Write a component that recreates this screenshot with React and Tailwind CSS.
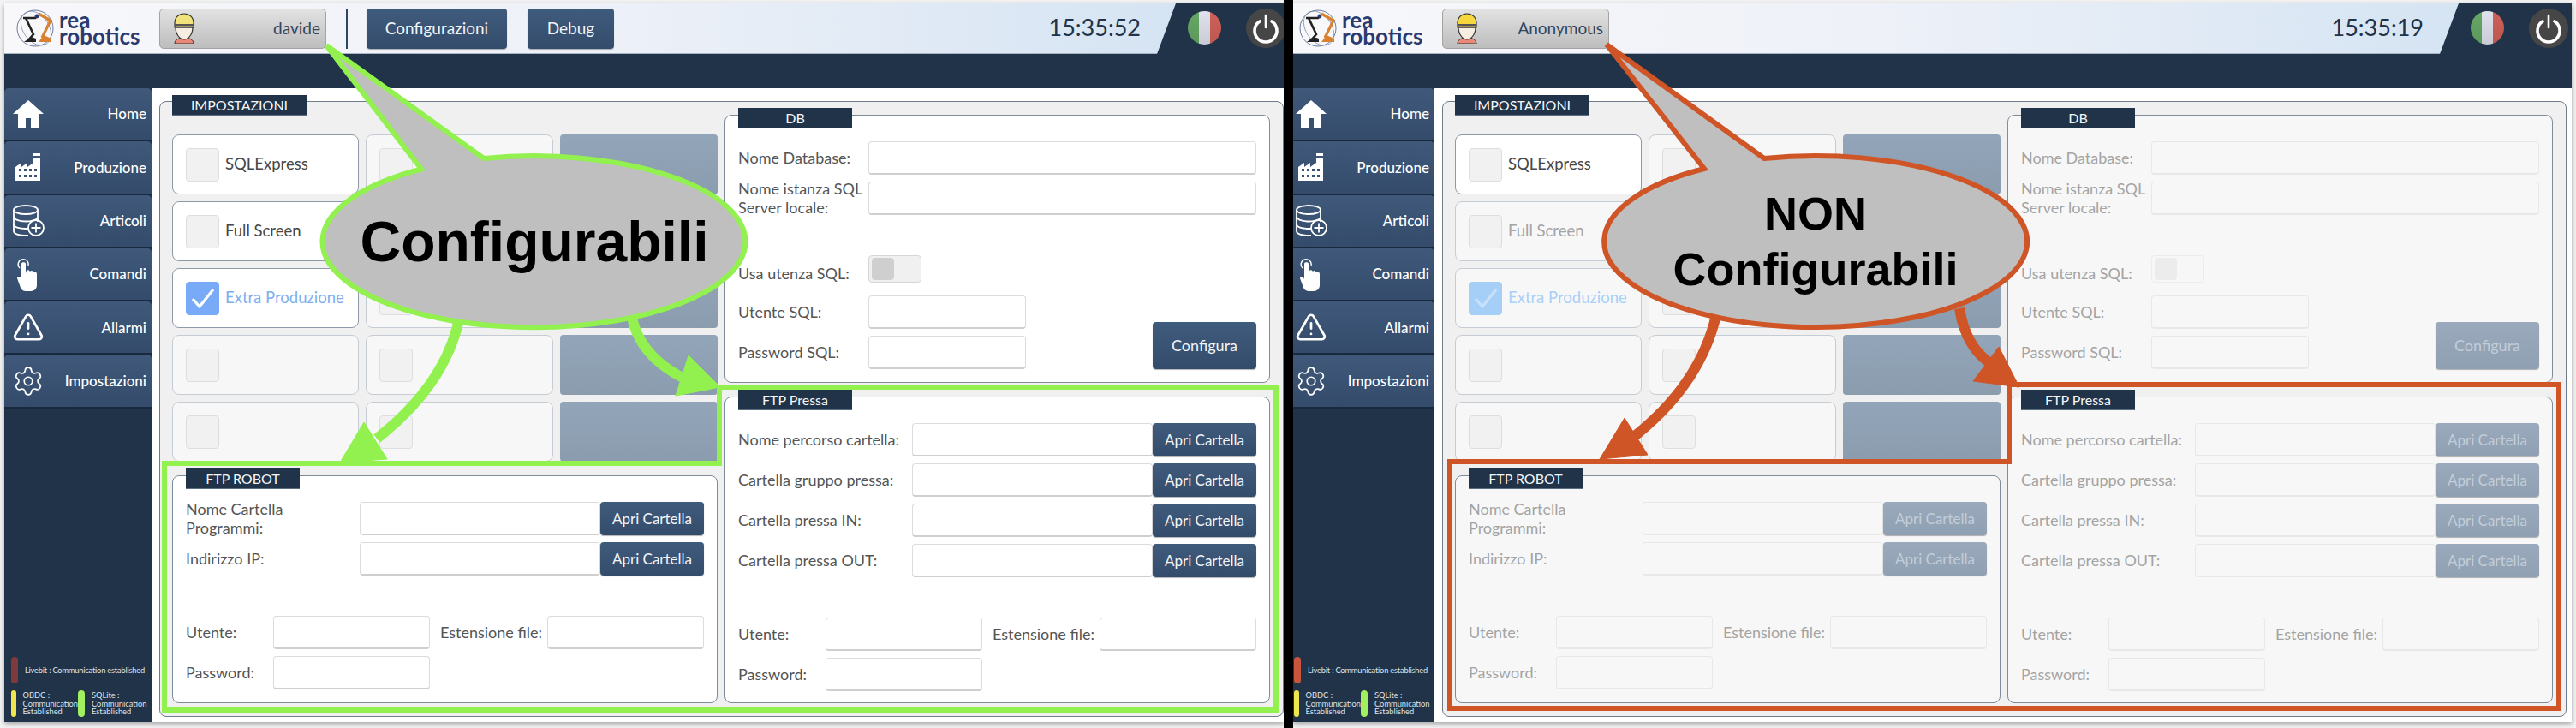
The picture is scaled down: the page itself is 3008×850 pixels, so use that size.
import React from "react";
import { Settings, TriangleAlert } from "lucide-react";

const NAV = [
  { label: "Home", icon: <HomeIcon /> },
  { label: "Produzione", icon: <FactoryIcon /> },
  { label: "Articoli", icon: <DatabaseIcon /> },
  { label: "Comandi", icon: <HandIcon /> },
  { label: "Allarmi", icon: <TriangleAlert size={40} strokeWidth={1.7} color="white" /> },
  { label: "Impostazioni", icon: <Settings size={40} strokeWidth={1.1} color="white" /> },
];

function HomeIcon() {
  return (
    <svg width="38" height="34" viewBox="0 0 38 34">
      <path d="M19 1 L37 17 L31 17 L31 33 L22 33 L22 22 L16 22 L16 33 L7 33 L7 17 L1 17 Z" fill="white" />
    </svg>
  );
}

function FactoryIcon() {
  return (
    <svg width="32" height="32" viewBox="0 0 32 32">
      <rect x="22" y="0" width="8" height="3" fill="white" />
      <path d="M1 16 L8 11 L8 16 L15 11 L15 16 L22 11 L22 6 L30 6 L30 32 L1 32 Z" fill="white" />
      <g fill="#3a5272">
        <rect x="5" y="18" width="3" height="3" />
        <rect x="11" y="18" width="3" height="3" />
        <rect x="17" y="18" width="3" height="3" />
        <rect x="23" y="18" width="3" height="3" />
        <rect x="5" y="25" width="3" height="3" />
        <rect x="11" y="25" width="3" height="3" />
        <rect x="17" y="25" width="3" height="3" />
        <rect x="23" y="25" width="3" height="3" />
      </g>
    </svg>
  );
}

function DatabaseIcon() {
  return (
    <svg width="38" height="38" viewBox="0 0 38 38" fill="none" stroke="white" strokeWidth="1.8">
      <ellipse cx="16" cy="6" rx="14" ry="5" />
      <path d="M2 6 V31 C2 34 8 36 16 36 H19 M30 6 V20" />
      <path d="M2 14 C2 17 8 19.500 16 19.500 C22 19.500 27 18 30 16" />
      <path d="M2 23 C2 26 8 28 16 28 H20" />
      <circle cx="28" cy="27" r="9" />
      <path d="M28 21.500 V32.500 M22.500 27 H33.500" />
    </svg>
  );
}

function HandIcon() {
  return (
    <svg width="30" height="42" viewBox="0 0 30 42">
      <path d="M5 14 A6 6 0 1 1 15 11" fill="none" stroke="white" strokeWidth="1.4" />
      <path
        d="M7 9 C7 6.500 12 6.500 12 9 V20 L13 17 C14 16 16 16 17 18 C18 16.500 20 16.500 21 19 C22 18 25 18 25 21 V34 C25 38 22 41 18 41 H12 C8 41 6 38 5 34 L2 26 C2 24 4 23 6 25 L7 27 Z"
        fill="white"
      />
    </svg>
  );
}

function WorkerIcon({ hat }) {
  return (
    <svg width="26" height="36" viewBox="0 0 26 36">
      <path d="M2 36 C2 31 7 29 13 29 C19 29 24 31 24 36 Z" fill="#e9897a" stroke="#333" strokeWidth="1" />
      <path d="M3 17 C3 25 8 31 13 31 C18 31 23 25 23 17 Z" fill="#f6eee2" stroke="#333" strokeWidth="1.2" />
      <path d="M2 17 V12 C2 5 7 1 13 1 C19 1 24 5 24 12 V17 Z" fill={hat} stroke="#333" strokeWidth="1.2" />
      <rect x="2" y="13" width="22" height="2.500" fill="#555" />
    </svg>
  );
}

function Logo() {
  return (
    <div className="flex items-center ml-[14px] w-[147px]">
      <svg width="46" height="46" viewBox="0 0 46 46" className="shrink-0">
        <circle cx="22" cy="23" r="21" fill="none" stroke="#4a5a86" strokeWidth="0.8" />
        <ellipse cx="23" cy="23" rx="15" ry="22" fill="none" stroke="#7c88a8" strokeWidth="0.7" transform="rotate(-35 23 23)" />
        <path d="M8 11 H22 L24 9 M11 11 L20 30 L13 38" fill="none" stroke="#222" strokeWidth="2.600" />
        <path d="M9 39 H23 V35 L17 33 Z" fill="#222" />
        <circle cx="24" cy="9" r="2.400" fill="#2a3a6e" />
        <path d="M26 6 L40 14 L30 34" fill="none" stroke="#d9812f" strokeWidth="3.200" />
        <path d="M26 39 H41 V35 L32 31 Z" fill="#d9812f" />
      </svg>
      <div className="ml-[4px] font-['Lato',sans-serif] font-bold text-[#2a3a6e] text-[26px] leading-[19px]">
        rea<br />robotics
      </div>
    </div>
  );
}

function Flag() {
  return (
    <div className="relative flex w-[39px] h-[39px] rounded-full overflow-hidden">
      <div className="flex-1 bg-[#66a766]" />
      <div className="flex-1 bg-[#dfe2ec]" />
      <div className="flex-1 bg-[#cf6158]" />
      <div className="absolute inset-0 bg-gradient-to-b from-transparent to-black/10" />
    </div>
  );
}

function PowerButton() {
  return (
    <div className="flex items-center justify-center w-[46px] h-[46px] rounded-full bg-[#464646]">
      <svg width="36" height="36" viewBox="0 0 36 36" fill="none" stroke="white" strokeWidth="3.600" strokeLinecap="round">
        <path d="M11 10 A13 13 0 1 0 25 10" />
        <path d="M18 3 V17" strokeWidth="2.600" />
      </svg>
    </div>
  );
}

function Header({ user, time, admin }) {
  return (
    <div className="flex h-[59px] bg-[#203349] shrink-0">
      <div className="flex w-[1368px] h-[59px] items-center bg-gradient-to-r from-[#f8f8fb] via-[#eef1f8] to-[#d5e4f3] border-b border-[#a9b4c2] [clip-path:polygon(0_0,100%_0,calc(100%-22px)_100%,0_100%)]">
        <Logo />
        <div className="flex items-center justify-between ml-[20px] w-[195px] h-[47px] pl-[15px] pr-[6px] rounded-[5px] border border-[#a3a3a3] bg-gradient-to-b from-[#e2e2e2] to-[#bdbdbd] text-[#2f4560] text-[19px]">
          <WorkerIcon hat={admin ? "#f1e27c" : "#f6d83e"} />
          <span>{user}</span>
        </div>
        {admin && (
          <>
            <div className="ml-[23px] w-[2px] h-[47px] bg-[#2f4560]" />
            <BlueButton className="ml-[22px] w-[164px] h-[47px] text-[19px]">Configurazioni</BlueButton>
            <BlueButton className="ml-[24px] w-[101px] h-[47px] text-[19px]">Debug</BlueButton>
          </>
        )}
        <div className="ml-auto mr-[41px] text-[#203349] text-[27px] leading-none pb-[4px]">{time}</div>
      </div>
      <div className="flex items-center ml-[14px] gap-[29px] pb-[2px]">
        <Flag />
        <PowerButton />
      </div>
    </div>
  );
}

function BlueButton({ children, className, disabled }) {
  const look = disabled
    ? "bg-gradient-to-b from-[#9aaabc] to-[#8fa0b2] text-[#c3cdd8]"
    : "bg-gradient-to-b from-[#3f5b7c] to-[#344c6c] text-[#f2f4f7]";
  return <div className={`flex items-center justify-center rounded-[4px] shrink-0 shadow-[0_1px_1px_rgba(0,0,0,0.3)] ${look} ${className}`}>{children}</div>;
}

function Sidebar({ liveColor }) {
  return (
    <div className="flex flex-col w-[172px] shrink-0 bg-[#203349]">
      {NAV.map((n) => (
        <div
          key={n.label}
          className="flex items-center justify-between h-[62.300px] pl-[9px] pr-[6px] rounded-t-[5px] border-b-2 border-[#1a2a3e] bg-gradient-to-b from-[#40597a] to-[#344b6b] text-white text-[17px] font-medium"
        >
          <div className="flex justify-center w-[38px]">{n.icon}</div>
          <span>{n.label}</span>
        </div>
      ))}
      <div className="mt-auto pl-[8px] pb-[6px] text-[9.300px] leading-[9.500px] text-[#dfe4ea] whitespace-nowrap">
        <div className="flex items-center gap-[8px]">
          <div className={`w-[8px] h-[31px] rounded-full ${liveColor}`} />
          <span className="leading-[12px] tracking-[-0.2px]">Livebit : Communication established</span>
        </div>
        <div className="flex mt-[8px]">
          <div className="flex items-center gap-[8px] w-[78px]">
            <div className="w-[8px] h-[31px] rounded-full bg-[#efe64f]" />
            <span>OBDC :<br />Communication<br />Established</span>
          </div>
          <div className="flex items-center gap-[8px]">
            <div className="w-[8px] h-[31px] rounded-full bg-[#a0f060]" />
            <span>SQLite :<br />Communication<br />Established</span>
          </div>
        </div>
      </div>
    </div>
  );
}

function Tile({ label, enabled, checked }) {
  const tile = enabled ? "bg-white border-[#8d99a8]" : "bg-[#f7f7f7] border-[#c6ccd3]";
  let text = enabled ? "text-[#474747]" : "text-[#a4a4a4]";
  let box = "bg-[#f1f1f1] border-[#dedede]";
  if (checked) {
    text = enabled ? "text-[#7dafef]" : "text-[#a9d0f8]";
    box = enabled ? "bg-[#78aaf7] border-[#78aaf7]" : "bg-[#a6cff8] border-[#a6cff8]";
  }
  return (
    <div className={`flex items-center h-[70px] pl-[15px] rounded-[8px] border ${tile}`}>
      <div className={`flex items-center justify-center w-[39px] h-[39px] rounded-[4px] border ${box}`}>
        {checked && (
          <svg width="30" height="26" viewBox="0 0 30 26" fill="none" stroke={enabled ? "white" : "#c8e0fa"} strokeWidth="3.200">
            <path d="M3 14 L11 23 L27 3" />
          </svg>
        )}
      </div>
      {label && <span className={`ml-[7px] text-[18.500px] ${text}`}>{label}</span>}
    </div>
  );
}

function Field({ className, enabled }) {
  const look = enabled ? "bg-white border-[#dcdcdc] border-b-[#cfcfcf]" : "bg-[#f7f7f7] border-[#e8e8e8]";
  return <div className={`h-[39px] rounded-[4px] border border-b-2 ${look} ${className}`} />;
}

function GroupBox({ title, tagWidth, height, enabled, children }) {
  return (
    <div className={`relative w-[637px] px-[15px] pt-[30px] rounded-[8px] border border-[#7f8c9b] ${enabled ? "bg-white" : "bg-[#f7f7f7]"} ${height}`}>
      <div className={`absolute -top-[9px] left-[15px] flex items-center justify-center h-[24px] bg-[#203349] border-b border-[#5d6d80] text-[#f4f6f8] text-[16px] ${tagWidth}`}>
        {title}
      </div>
      {children}
    </div>
  );
}

function Row({ label, enabled, labelWidth = "w-[203px]", button = true, inputWidth = "flex-1" }) {
  return (
    <div className="flex items-center h-[39px]">
      <div className={`shrink-0 text-[18px] leading-[21.700px] ${enabled ? "text-[#555]" : "text-[#a4a4a4]"} ${labelWidth}`}>{label}</div>
      <Field className={inputWidth} enabled={enabled} />
      {button && (
        <BlueButton disabled={!enabled} className="w-[121px] h-[39px] text-[17px]">
          Apri Cartella
        </BlueButton>
      )}
    </div>
  );
}

function UserFields({ enabled }) {
  const color = enabled ? "text-[#555]" : "text-[#a4a4a4]";
  return (
    <div className="flex flex-col gap-[8px] mt-[47px] text-[18px]">
      <div className="flex items-center h-[39px]">
        <div className={`w-[102px] ${color}`}>Utente:</div>
        <Field className="w-[183px]" enabled={enabled} />
        <div className={`w-[125px] ml-[12px] ${color}`}>Estensione file:</div>
        <Field className="w-[183px]" enabled={enabled} />
      </div>
      <div className="flex items-center h-[39px]">
        <div className={`w-[102px] ${color}`}>Password:</div>
        <Field className="w-[183px]" enabled={enabled} />
      </div>
    </div>
  );
}

function DbBox({ enabled }) {
  const color = enabled ? "text-[#555]" : "text-[#a4a4a4]";
  return (
    <GroupBox title="DB" tagWidth="w-[133px]" height="h-[313px]" enabled={enabled}>
      <div className="flex flex-col gap-[8px]">
        <Row label="Nome Database:" enabled={enabled} labelWidth="w-[152px]" button={false} />
        <Row label={<>Nome istanza SQL<br />Server locale:</>} enabled={enabled} labelWidth="w-[152px]" button={false} />
      </div>
      <div className="flex items-center h-[32px] mt-[47px] text-[18px]">
        <div className={`w-[152px] pt-[10px] ${color}`}>Usa utenza SQL:</div>
        <div className={`flex items-center w-[62px] h-[32px] px-[3px] rounded-[4px] border ${enabled ? "bg-[#f0f0f0] border-[#d6d6d6]" : "bg-[#f7f7f7] border-[#ececec]"}`}>
          <div className={`w-[26px] h-[26px] rounded-[4px] ${enabled ? "bg-[#cfcfcf]" : "bg-[#ececec]"}`} />
        </div>
      </div>
      <div className="flex justify-between items-end mt-[15px]">
        <div className="flex flex-col gap-[8px] w-[336px]">
          <Row label="Utente SQL:" enabled={enabled} labelWidth="w-[152px]" button={false} />
          <Row label="Password SQL:" enabled={enabled} labelWidth="w-[152px]" button={false} />
        </div>
        <BlueButton disabled={!enabled} className="w-[121px] h-[55px] text-[18px]">
          Configura
        </BlueButton>
      </div>
    </GroupBox>
  );
}

function SettingsPanel({ admin }) {
  return (
    <div className="relative flex h-full pl-[14px] pt-[15px] rounded-[8px] border border-[#6f7c8c] bg-[#f0f0f0]">
      <div className="absolute -top-[8px] left-[14px] flex items-center justify-center w-[157px] h-[24px] bg-[#203349] border-b border-[#5d6d80] text-[#f4f6f8] text-[16px]">
        IMPOSTAZIONI
      </div>
      <div className="flex flex-col w-[637px] pt-[23px]">
        <div className="grid grid-cols-[218px_219px_184px] auto-rows-[70px] gap-x-[8px] gap-y-[8px]">
          <Tile label="SQLExpress" enabled />
          <Tile />
          <Muted />
          <Tile label="Full Screen" enabled={admin} />
          <Tile />
          <Muted />
          <Tile label="Extra Produzione" enabled={admin} checked />
          <Tile />
          <Muted />
          <Tile />
          <Tile />
          <Muted />
          <Tile />
          <Tile />
          <Muted />
        </div>
        <div className="mt-[16px]">
          <GroupBox title="FTP ROBOT" tagWidth="w-[133px]" height="h-[266px]" enabled={admin}>
            <div className="flex flex-col gap-[8px]">
              <Row label={<>Nome Cartella<br />Programmi:</>} enabled={admin} />
              <Row label="Indirizzo IP:" enabled={admin} />
            </div>
            <UserFields enabled={admin} />
          </GroupBox>
        </div>
      </div>
      <div className="flex flex-col gap-[16px] ml-[8px]">
        <DbBox enabled={admin} />
        <GroupBox title="FTP Pressa" tagWidth="w-[133px]" height="h-[358px]" enabled={admin}>
          <div className="flex flex-col gap-[8px]">
            <Row label="Nome percorso cartella:" enabled={admin} />
            <Row label="Cartella gruppo pressa:" enabled={admin} />
            <Row label="Cartella pressa IN:" enabled={admin} />
            <Row label="Cartella pressa OUT:" enabled={admin} />
          </div>
          <UserFields enabled={admin} />
        </GroupBox>
      </div>
    </div>
  );
}

function Muted() {
  return <div className="rounded-[4px] bg-gradient-to-b from-[#93a5b8] to-[#8a9cae]" />;
}

function Screen({ user, time, admin }) {
  return (
    <div className="flex flex-col w-[1500px] h-[839px] font-['Lato',sans-serif]">
      <Header user={user} time={time} admin={admin} />
      <div className="h-[40px] bg-[#203349] shrink-0" />
      <div className="flex flex-1 min-h-0">
        <Sidebar liveColor={admin ? "bg-[#7f3b3b]" : "bg-[#c9553f]"} />
        <div className="flex-1 bg-white pl-[9px] pr-[6px] pt-[15px] pb-[6px]">
          <SettingsPanel admin={admin} />
        </div>
      </div>
    </div>
  );
}

// annotazioni sopra le due schermate
function Annotations() {
  return (
    <svg className="absolute inset-0" width="3008" height="850" viewBox="0 0 3008 850" fill="none">
      <g stroke="#92f14f">
        <path d="M192 541 H840 V452 H1490 V829 H192 Z" strokeWidth="6" />
        <path d="M537 368 Q 522 448 440 512" strokeWidth="12" />
        <path d="M425 493 L452 536 L397 540 Z" fill="#92f14f" strokeWidth="1" />
        <path d="M737 365 Q 745 420 812 448" strokeWidth="12" />
        <path d="M804 415 L789 462 L841 452 Z" fill="#92f14f" strokeWidth="1" />
        <path d="M381 53 L565 185 A247 100 0 1 1 492 197.500 Z" fill="#bfbfbf" strokeWidth="6" />
      </g>
      <g stroke="#cf5426">
        <path d="M1693 539 H2346 V449 H2988 V827 H1693 Z" strokeWidth="6" />
        <path d="M2004 368 Q 1985 450 1905 512" strokeWidth="12" />
        <path d="M1897 488 L1924 531 L1868 536 Z" fill="#cf5426" strokeWidth="1" />
        <path d="M2288 360 Q 2295 405 2325 425" strokeWidth="12" />
        <path d="M2334 405 L2304 445 L2358 452 Z" fill="#cf5426" strokeWidth="1" />
        <path d="M1876 52 L2060 185 A247 100 0 1 1 1990 197 Z" fill="#bfbfbf" strokeWidth="6" />
      </g>
    </svg>
  );
}

function CalloutText({ className, children }) {
  return (
    <div className={`absolute flex items-center justify-center text-center w-[494px] h-[200px] top-[182px] font-['Liberation_Sans',sans-serif] font-bold text-black leading-[65px] ${className}`}>
      {children}
    </div>
  );
}

export default function App() {
  return (
    <div className="relative flex w-[3008px] h-[850px] overflow-hidden bg-[#f4f4f4]">
      <div className="ml-[5px] mt-[4px] w-[1494px] h-[839px] overflow-hidden shrink-0 shadow-[0_2px_6px_rgba(0,0,0,0.35)]">
        <Screen user="davide" time="15:35:52" admin />
      </div>
      <div className="w-[11px] h-[850px] bg-black shrink-0" />
      <div className="mt-[4px] w-[1493px] h-[839px] overflow-hidden shrink-0 shadow-[0_2px_6px_rgba(0,0,0,0.35)]">
        <div className="-ml-[7px]">
          <Screen user="Anonymous" time="15:35:19" />
        </div>
      </div>
      <Annotations />
      <CalloutText className="left-[377px] text-[66px]">Configurabili</CalloutText>
      <CalloutText className="left-[1873px] text-[54px]">
        <span>NON<br />Configurabili</span>
      </CalloutText>
    </div>
  );
}
